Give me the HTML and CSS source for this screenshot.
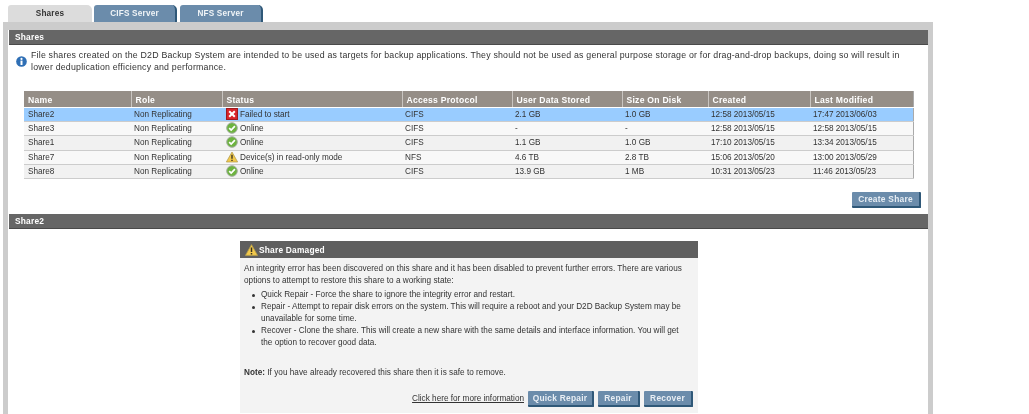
FILE: index.html
```html
<!DOCTYPE html>
<html lang="en">
<head>
<meta charset="utf-8">
<title>Shares</title>
<link rel="stylesheet" href="styles.css">
</head>
<body>
<svg class="defs" width="0" height="0" aria-hidden="true">
  <symbol id="ok" viewBox="0 0 12 12">
    <circle cx="6" cy="6" r="5.3" fill="#6db33f" stroke="#a3aea0" stroke-width="1"/>
    <path d="M3.2 6.1 5.2 8.1 8.9 4.1" fill="none" stroke="#fff" stroke-width="1.7"/>
  </symbol>
  <symbol id="warn" viewBox="0 0 13 12">
    <path d="M6.5.6 12.6 11.4H.4Z" fill="#f2c94c" stroke="#b09a4a" stroke-width=".8"/>
    <path d="M6.5 3.6V8M6.5 9V10.4" stroke="#3a3320" stroke-width="1.5"/>
  </symbol>
</svg>
<nav class="tabs">
  <a class="tab tab-active">Shares</a>
  <a class="tab">CIFS Server</a>
  <a class="tab">NFS Server</a>
</nav>
<main class="panel">
  <h2 class="bar">Shares</h2>
  <div class="notice">
    <svg class="info" viewBox="0 0 12 12" aria-hidden="true">
      <circle cx="6" cy="6" r="5.8" fill="#2f6fb5"/>
      <circle cx="6" cy="3.2" r="1.2" fill="#fff"/>
      <path d="M6 5V9.8" stroke="#fff" stroke-width="2.2"/>
    </svg>
    <p>File shares created on the D2D Backup System are intended to be used as targets for backup applications. They should not be used as general purpose storage or for drag-and-drop backups, doing so will result in lower deduplication efficiency and performance.</p>
  </div>
  <table class="grid">
    <colgroup>
      <col class="c1"><col class="c2"><col class="c3"><col class="c4"><col class="c5"><col class="c6"><col class="c7"><col class="c8">
    </colgroup>
    <thead>
      <tr><th>Name</th><th>Role</th><th>Status</th><th>Access Protocol</th><th>User Data Stored</th><th>Size On Disk</th><th>Created</th><th>Last Modified</th></tr>
    </thead>
    <tbody>
      <tr class="selected"><td>Share2</td><td>Non Replicating</td><td><span class="status"><svg class="ico" viewBox="0 0 12 12" aria-hidden="true"><rect x=".5" y=".5" width="11" height="11" fill="#d8232a" stroke="#9c1a1f"/><path d="M3.2 3.2 8.8 8.8M8.8 3.2 3.2 8.8" stroke="#fff" stroke-width="2"/></svg>Failed to start</span></td><td>CIFS</td><td>2.1 GB</td><td>1.0 GB</td><td>12:58 2013/05/15</td><td>17:47 2013/06/03</td></tr>
      <tr><td>Share3</td><td>Non Replicating</td><td><span class="status"><svg class="ico"><use href="#ok"/></svg>Online</span></td><td>CIFS</td><td>-</td><td>-</td><td>12:58 2013/05/15</td><td>12:58 2013/05/15</td></tr>
      <tr><td>Share1</td><td>Non Replicating</td><td><span class="status"><svg class="ico"><use href="#ok"/></svg>Online</span></td><td>CIFS</td><td>1.1 GB</td><td>1.0 GB</td><td>17:10 2013/05/15</td><td>13:34 2013/05/15</td></tr>
      <tr><td>Share7</td><td>Non Replicating</td><td><span class="status"><svg class="ico"><use href="#warn"/></svg>Device(s) in read-only mode</span></td><td>NFS</td><td>4.6 TB</td><td>2.8 TB</td><td>15:06 2013/05/20</td><td>13:00 2013/05/29</td></tr>
      <tr><td>Share8</td><td>Non Replicating</td><td><span class="status"><svg class="ico"><use href="#ok"/></svg>Online</span></td><td>CIFS</td><td>13.9 GB</td><td>1 MB</td><td>10:31 2013/05/23</td><td>11:46 2013/05/23</td></tr>
    </tbody>
  </table>
  <div class="actions"><button class="btn">Create Share</button></div>
  <h2 class="bar">Share2</h2>
  <section class="dialog">
    <h3 class="dialog-title"><svg class="ico-title"><use href="#warn"/></svg>Share Damaged</h3>
    <div class="dialog-body">
      <p>An integrity error has been discovered on this share and it has been disabled to prevent further errors. There are various options to attempt to restore this share to a working state:</p>
      <ul>
        <li>Quick Repair - Force the share to ignore the integrity error and restart.</li>
        <li>Repair - Attempt to repair disk errors on the system. This will require a reboot and your D2D Backup System may be unavailable for some time.</li>
        <li>Recover - Clone the share. This will create a new share with the same details and interface information. You will get the option to recover good data.</li>
      </ul>
      <p class="note"><b>Note:</b> If you have already recovered this share then it is safe to remove.</p>
      <div class="dialog-actions">
        <a class="more">Click here for more information</a>
        <button class="btn btn-quick">Quick Repair</button>
        <button class="btn btn-repair">Repair</button>
        <button class="btn btn-recover">Recover</button>
      </div>
    </div>
  </section>
</main>
</body>
</html>
```
FILE: styles.css
```css
* { box-sizing: border-box; }
html, body { height: 100%; overflow: hidden; }
body {
  margin: 0;
  padding: 5px 96px 0 3px;
  background: #fff;
  color: #333;
  font: 8.2px/12px "Liberation Sans", Arial, sans-serif;
  filter: blur(0.35px);
}
.defs { position: absolute; }
.tabs { display: flex; gap: 3px; height: 17px; padding-left: 5px; }
.tab {
  width: 83px;
  border-radius: 3px 5px 0 0;
  background: #6b8cab;
  border-right: 2px solid #2f5878;
  color: #f0f4f7;
  font-weight: bold;
  font-size: 8.2px;
  text-align: center;
  line-height: 17px;
  letter-spacing: .2px;
}
.tab-active { width: 84px; margin-right: -1px; background: #dcdcdc; border-right: 0; color: #333; }
.panel {
  border: solid #ccc;
  border-width: 8px 5px 0;
  background: #fff;
  height: 392px;
}
.bar {
  margin: 0 0 0 1px;
  height: 15px;
  padding-left: 6px;
  background: #666;
  border-bottom: 1px solid #4a4a4a;
  color: #fff;
  font-size: 8.4px;
  line-height: 14px;
  letter-spacing: .2px;
}
.notice { display: flex; align-items: flex-start; gap: 4px; padding: 4px 22px 0 8px; height: 46px; }
.info { width: 11px; height: 11px; flex: none; margin-top: 7px; }
.notice p { margin: 0; font-size: 8.8px; line-height: 12px; letter-spacing: .2px; }
.grid {
  width: 889px;
  margin-left: 16px;
  table-layout: fixed;
  border-collapse: collapse;
  border-right: 1px solid #aaa;
  border-bottom: 1px solid #aaa;
}
.c1 { width: 107px; } .c2 { width: 91px; } .c3 { width: 180px; } .c4 { width: 110px; }
.c5 { width: 110px; } .c6 { width: 86px; } .c7 { width: 102px; } .c8 { width: 103px; }
.grid th {
  height: 16px;
  padding: 2px 4px 0;
  background: #958e87;
  border-left: 1px solid #c9c5c1;
  border-bottom: 1px solid #fff;
  color: #fff;
  text-align: left;
  font-size: 8.6px;
  letter-spacing: .25px;
}
.grid th:first-child { border-left: 0; }
.grid td {
  height: 14.4px;
  padding: 1px 3px 0;
  border-bottom: 1px solid #ccc;
  white-space: nowrap;
  line-height: 12px;
}
.grid td:first-child { padding-left: 4px; }
.grid tbody tr:nth-child(odd) td { background: #f1f1f1; }
.grid tbody tr:nth-child(even) td { background: #f8f8f8; }
.grid tbody tr.selected td { background: #99ccff; }
.status { display: flex; align-items: center; gap: 2px; padding-left: 1px; }
.ico { width: 12px; height: 12px; flex: none; margin: -1px 0 1px; }
.actions { display: flex; justify-content: flex-end; height: 35px; padding: 13px 7px 0 0; }
.btn {
  height: 16px;
  padding: 0 0 1px;
  width: 69px;
  background: #6b8cab;
  border: 0;
  border-right: 2px solid #2f5878;
  border-bottom: 2px solid #2f5878;
  border-radius: 1px;
  color: #e8eef4;
  font: bold 8.4px/12px "Liberation Sans", Arial, sans-serif;
  letter-spacing: .25px;
}
.btn-quick { width: 66px; }
.btn-repair { width: 42px; }
.btn-recover { width: 49px; }
.dialog { width: 458px; height: 172px; margin: 12px 0 0 232px; background: #f3f3f3; }
.dialog-title {
  display: flex;
  align-items: center;
  gap: 1px;
  margin: 0;
  height: 17px;
  padding-left: 5px;
  background: #5f5f5f;
  color: #fff;
  font-size: 8.4px;
  letter-spacing: .2px;
}
.ico-title { width: 13px; height: 12px; }
.dialog-body { padding: 5px 4px 0; }
.dialog-body p { margin: 0; line-height: 12px; letter-spacing: .02px; }
.dialog-body ul { margin: 2px 0 0; padding: 0 8px 0 8px; list-style: none; }
.dialog-body li { display: flex; gap: 6px; }
.dialog-body li::before { content: ""; flex: none; width: 3px; height: 3px; margin-top: 5px; border-radius: 50%; background: #333; }
.dialog-body .note { margin-top: 18px; }
.dialog-actions { display: flex; justify-content: flex-end; align-items: center; gap: 4px; margin-top: 12px; padding-right: 1px; }
.more { color: #333; text-decoration: underline; }
```
